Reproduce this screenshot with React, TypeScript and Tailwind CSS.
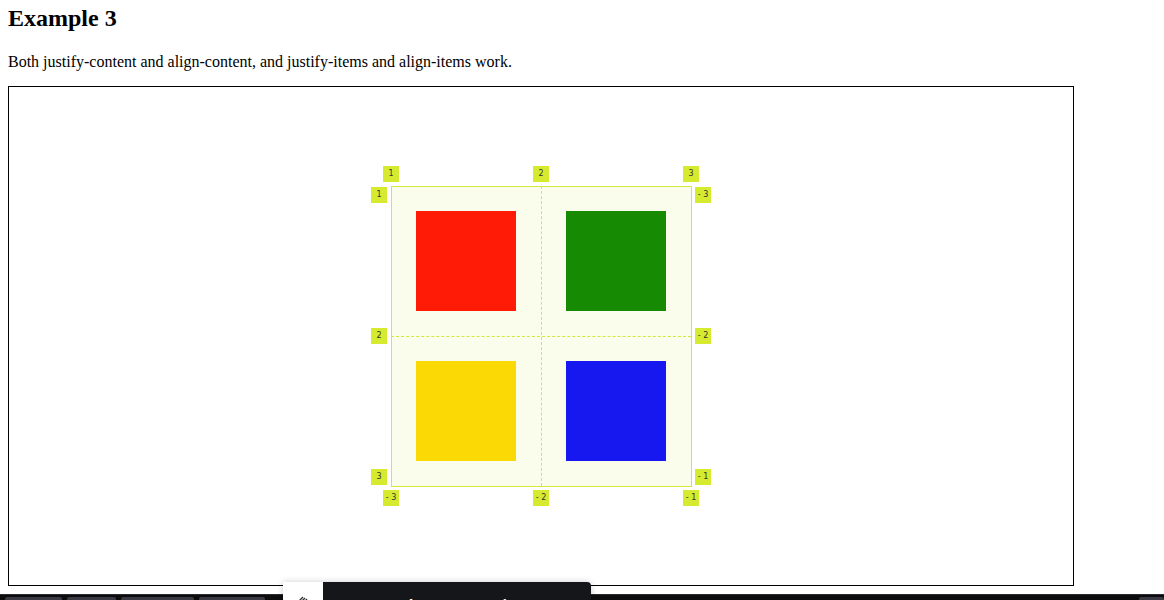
import React from "react";

const serif = { fontFamily: '"Liberation Serif", "Times New Roman", serif' };

const Tag = ({ text, className }: { text: string; className: string }) => (
    <div
        className={`absolute w-[16px] h-[16px] flex items-center justify-center bg-[#d6eb2f] text-[#333] text-[8px] leading-none ${className}`}
        style={{ fontFamily: '"DejaVu Sans", sans-serif' }}
    >
        {text}
    </div>
);

const Cell = ({ color }: { color: string }) => <div className={`w-[100px] h-[100px] ${color}`} />;

function GridDemo() {
    return (
        <div className="relative w-[300px] h-[300px] grid grid-cols-2 grid-rows-2 place-items-center bg-[#fafcec]">
            <Cell color="bg-[#ff1b05]" />
            <Cell color="bg-[#158a02]" />
            <Cell color="bg-[#fbd904]" />
            <Cell color="bg-[#1717ef]" />

            {/* grid inspector overlay */}
            <div className="absolute left-0 top-0 w-[301px] h-[301px] border border-[#d3e83a] pointer-events-none" />
            <div className="absolute left-[150px] top-0 h-[300px] border-l border-dashed border-[#d3e83a]" />
            <div className="absolute top-[150px] left-0 w-[300px] border-t border-dashed border-[#d3e83a]" />

            {/* column numbers */}
            <Tag text="1" className="left-[-8px] top-[-20px]" />
            <Tag text="2" className="left-[142px] top-[-20px]" />
            <Tag text="3" className="left-[292px] top-[-20px]" />
            <Tag text="- 3" className="left-[-8px] top-[304px]" />
            <Tag text="- 2" className="left-[142px] top-[304px]" />
            <Tag text="- 1" className="left-[292px] top-[304px]" />

            {/* row numbers */}
            <Tag text="1" className="left-[-20px] top-[1px]" />
            <Tag text="2" className="left-[-20px] top-[142px]" />
            <Tag text="3" className="left-[-20px] top-[283px]" />
            <Tag text="- 3" className="left-[304px] top-[1px]" />
            <Tag text="- 2" className="left-[304px] top-[142px]" />
            <Tag text="- 1" className="left-[304px] top-[283px]" />
        </div>
    );
}

export default function App() {
    return (
        <div className="relative w-[1164px] h-[600px] overflow-hidden bg-white text-black">
            <h2 className="pt-[5px] pl-[8px] text-[24px] leading-[27px] font-bold" style={serif}>
                Example 3
            </h2>
            <p className="mt-[21px] pl-[8px] text-[16px] leading-[18px]" style={serif}>
                Both justify-content and align-content, and justify-items and align-items work.
            </p>
            <div className="mt-[15px] ml-[8px] w-[1066px] h-[500px] border border-black flex items-center justify-center">
                <GridDemo />
            </div>

            {/* bottom toolbar */}
            <div className="mt-[8px] h-[20px] border-t border-[#2b2a33] bg-[#0c0c0d] flex gap-[5px] pl-[5px] pt-[2px]">
                <div className="w-[57px] h-[10px] rounded-[2px] bg-[#3a3a44]" />
                <div className="w-[49px] h-[10px] rounded-[2px] bg-[#3a3a44]" />
                <div className="w-[73px] h-[10px] rounded-[2px] bg-[#3a3a44]" />
                <div className="w-[66px] h-[10px] rounded-[2px] bg-[#3a3a44]" />
                <div className="ml-auto w-[25px] h-[10px] rounded-[2px] bg-[#3a3a44]" />
            </div>

            {/* overlay popup */}
            <div className="absolute left-[283px] top-[582px] w-[308px] h-[40px] flex shadow-[0_0_6px_rgba(0,0,0,0.2)] rounded-tr-[4px] overflow-hidden">
                <div className="w-[40px] bg-white flex justify-center pt-[12px]">
                    <svg width="16" height="16" viewBox="0 0 16 16" fill="none" stroke="#333" strokeWidth="1.4">
                        <path d="M3 8 L8 3 M5 9 L10 4 M7 10 L12 5" />
                    </svg>
                </div>
                <div
                    className="flex-1 bg-[#151619] text-white font-bold text-[15px] pl-[28px] pt-[11px] flex gap-[40px]"
                    style={{ fontFamily: '"Open Sans", sans-serif' }}
                >
                    <span>Screenshot</span>
                    <span>Options</span>
                </div>
            </div>
        </div>
    );
}
